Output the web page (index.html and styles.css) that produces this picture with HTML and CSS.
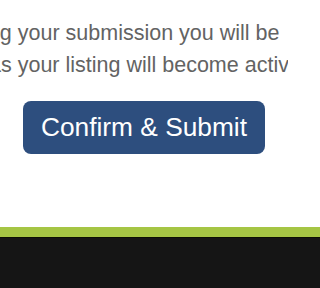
FILE: index.html
```html
<!DOCTYPE html>
<html>
<head>
<meta charset="utf-8">
<meta name="viewport" content="width=device-width, initial-scale=1">
<link rel="stylesheet" href="styles.css">
</head>
<body>
<main class="content">
  <div class="message">
    <p class="line line-1">reviewing your submission you will be</p>
    <p class="line line-2">as your listing will become active.</p>
  </div>
  <div class="actions">
    <button class="submit" type="button">Confirm &amp; Submit</button>
  </div>
</main>
<footer class="footer">
  <div class="footer-accent"></div>
  <div class="footer-body"></div>
</footer>
</body>
</html>
```
FILE: styles.css
```css
html, body {
  margin: 0;
  padding: 0;
  background: #ffffff;
}
body {
  height: 288px;
  overflow: hidden;
  font-family: "Liberation Sans", Arial, sans-serif;
}
.content {
  width: 288px;
  height: 227px;
  box-sizing: border-box;
  padding-top: 16.5px;
}
.message {
  width: 288px;
  overflow: hidden;
  color: #636363;
  font-size: 21.5px;
  line-height: 32px;
}
.line {
  margin: 0;
  white-space: nowrap;
}
.line-1 {
  margin-left: -79px;
}
.line-2 {
  margin-left: -11px;
}
.actions {
  display: flex;
  justify-content: center;
  padding-top: 20.5px;
}
.submit {
  width: 242px;
  height: 53px;
  border: 0;
  border-radius: 8px;
  background: #2d4e7e;
  color: #ffffff;
  font-family: "Liberation Sans", Arial, sans-serif;
  font-size: 26.3px;
  padding: 0;
  line-height: 53px;
}
.footer-accent {
  height: 10px;
  background: #a5c544;
}
.footer-body {
  height: 51px;
  background: #151515;
  border-top: 1px solid #0b0f02;
  box-sizing: border-box;
}
```
